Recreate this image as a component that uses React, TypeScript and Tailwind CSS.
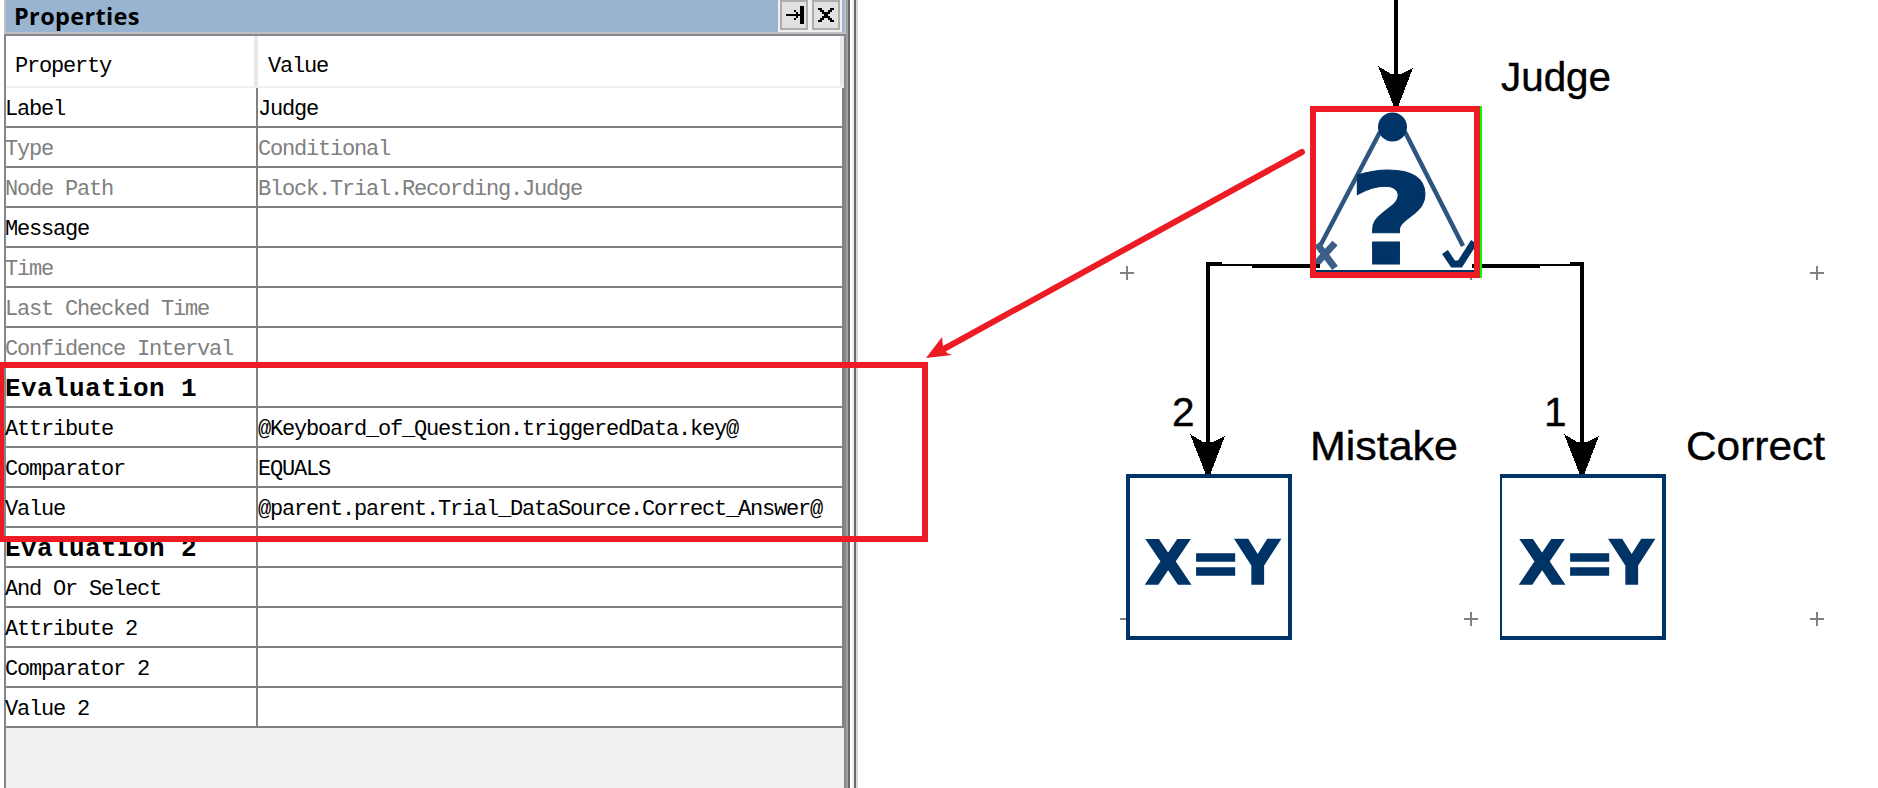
type Row = { name: string; value?: string; kind?: 'dim' | 'head' };

const rows: Row[] = [
  { name: 'Label', value: 'Judge' },
  { name: 'Type', value: 'Conditional', kind: 'dim' },
  { name: 'Node Path', value: 'Block.Trial.Recording.Judge', kind: 'dim' },
  { name: 'Message' },
  { name: 'Time', kind: 'dim' },
  { name: 'Last Checked Time', kind: 'dim' },
  { name: 'Confidence Interval', kind: 'dim' },
  { name: 'Evaluation 1', kind: 'head' },
  { name: 'Attribute', value: '@Keyboard_of_Question.triggeredData.key@' },
  { name: 'Comparator', value: 'EQUALS' },
  { name: 'Value', value: '@parent.parent.Trial_DataSource.Correct_Answer@' },
  { name: 'Evaluation 2', kind: 'head' },
  { name: 'And Or Select' },
  { name: 'Attribute 2' },
  { name: 'Comparator 2' },
  { name: 'Value 2' },
];

const mono = "font-['Liberation_Mono',monospace]";

function PropertyRow({ name, value, kind }: Row) {
  const tone =
    kind === 'head'
      ? 'text-[26px] leading-[42px] font-bold tracking-[0.4px] text-black'
      : kind === 'dim'
        ? 'text-[22px] leading-[44px] tracking-[-1.2px] text-[#808080]'
        : 'text-[22px] leading-[44px] tracking-[-1.2px] text-black';
  return (
    <div className={`flex h-10 w-[838px] border-r-2 border-b-2 border-[#808080] whitespace-pre ${tone}`}>
      <div className="w-[252px] shrink-0 border-r-2 border-[#808080]">
        <span className="-ml-px">{name}</span>
      </div>
      <div>{value}</div>
    </div>
  );
}

function PropertiesPanel() {
  return (
    <aside className="flex h-full w-[858px] shrink-0 pl-1">
      <div className="flex w-[842px] flex-col">
        <header className="flex h-[34px] shrink-0 border-x-2 border-b-2 border-[#c0c0c0] bg-[#99b4d1]">
          <h1 className="flex-1 pl-2 font-['Open_Sans',sans-serif] text-[23.5px] leading-[32px] font-bold tracking-[0.35px] text-black">
            Properties
          </h1>
          <div className="mr-0.5 flex h-8 w-16 gap-1 bg-[#f0f0f0] px-0.5 pb-0.5">
            <button aria-label="Pin" className="h-[30px] w-7 border-2 border-[#adadad] bg-[#e1e1e1]">
              <svg viewBox="0 0 24 26" className="block h-[26px] w-6" shapeRendering="crispEdges">
                <path d="M4 12h14v2H4zM12 8h2v2h2v2h2v2h-2v2h-2v2h-2v-2h2v-6h-2zM18 4h4v18h-4z" />
              </svg>
            </button>
            <button aria-label="Close" className="h-[30px] w-7 border-2 border-[#adadad] bg-[#e1e1e1]">
              <svg viewBox="0 0 24 26" className="block h-[26px] w-6" shapeRendering="crispEdges">
                <path d="M4 6h4v2h2v2h4V8h2V6h4v2h-2v2h-2v2h-2v2h2v2h2v2h2v2h-4v-2h-2v-2h-4v2H8v2H4v-2h2v-2h2v-2h2v-2H8v-2H6V8H4z" />
              </svg>
            </button>
          </div>
        </header>
        <div className="flex flex-1 flex-col border-x-2 border-t-2 border-[#828790] bg-[#f0f0f0]">
          <div className={`flex h-[52px] shrink-0 border-b-2 border-[#f0f0f0] bg-white text-[22px] leading-[62px] tracking-[-1.2px] ${mono}`}>
            <div className="w-[252px] border-r-4 border-[#e9e9e9] pl-[9px]">Property</div>
            <div className="flex-1 border-r-4 border-[#e9e9e9] pl-[10px]">Value</div>
          </div>
          <div className={`bg-white ${mono}`}>
            {rows.map((r) => (
              <PropertyRow key={r.name} {...r} />
            ))}
          </div>
        </div>
      </div>
      <div className="w-0.5 bg-[#a0a0a0]" />
      <div className="w-0.5 bg-[#696969]" />
      <div className="w-0.5 bg-white" />
      <div className="w-0.5 bg-[#f0f0f0]" />
      <div className="w-0.5 bg-[#696969]" />
      <div className="w-0.5 bg-[#d8d8d8]" />
    </aside>
  );
}

function ArrowHead({ x, y }: { x: number; y: number }) {
  return (
    <path
      d={`M${x - 2} ${y}L${x - 18} ${y - 41}L${x - 5} ${y - 33}H${x + 5}L${x + 17} ${y - 39}L${x + 2} ${y}Z`}
      fill="#000"
      shapeRendering="crispEdges"
    />
  );
}

function Assignment({ x, left }: { x: number; left: number }) {
  return (
    <g>
      <rect x={x} y={474} width={166} height={166} fill="#003366" />
      <rect x={x + left} y={478} width={162 - left} height={158} fill="#fff" />
      <g fill="#003366" stroke="#003366" strokeWidth="1.5" fontFamily="'DejaVu Sans'" fontWeight="700" fontSize="60">
        <text y="584" x={`${x + 19} ${x + 64.5} ${x + 110}`}>X=Y</text>
      </g>
    </g>
  );
}

function Diagram() {
  return (
    <svg viewBox="858 0 1020 788" className="block h-[788px] w-[1020px]">
      <path
        d="M1120 273h14M1127 266v14M1810 273h14M1817 266v14M1464 273h14M1471 266v14M1120 619h14M1464 619h14M1471 612v14M1810 619h14M1817 612v14"
        stroke="#808080"
        strokeWidth="2"
      />
      <g fill="none" stroke="#000" strokeWidth="4">
        <path d="M1396 0V106" />
        <path d="M1320 266H1252M1208 474V264H1222" />
        <path d="M1472 266H1540M1582 474V264H1570" />
        <path d="M1220 265H1254M1538 265H1572" strokeWidth="2" />
      </g>
      <ArrowHead x={1396} y={107} />
      <ArrowHead x={1208} y={475} />
      <ArrowHead x={1582} y={475} />
      <g fontFamily="'Liberation Sans'" fontSize="40.5" fill="#000" stroke="#000" strokeWidth="0.4">
        <text x="1501" y="91" textLength="110" lengthAdjust="spacingAndGlyphs">Judge</text>
        <text x="1310" y="460" textLength="148" lengthAdjust="spacingAndGlyphs">Mistake</text>
        <text x="1686" y="460" textLength="139" lengthAdjust="spacingAndGlyphs">Correct</text>
        <text x="1172" y="426">2</text>
        <text x="1544" y="426">1</text>
      </g>
      <Assignment x={1126} left={4} />
      <Assignment x={1500} left={2} />
      <rect x="1316" y="112" width="158" height="160" fill="#fff" />
      <g stroke="#003366" fill="none">
        <path d="M1380 132L1319 248M1405 132L1463 246" strokeWidth="4.5" stroke="#2d567f" />
        <circle cx="1392.500" cy="127" r="14.500" fill="#003366" stroke="none" />
        <path d="M1317 244L1335 268M1335 243L1316 264" strokeWidth="7" stroke="#3b5f87" />
        <path d="M1445 252L1453 264H1460L1474 242" strokeWidth="7" />
        <path d="M1316 271H1474" strokeWidth="2" />
        <path d="M1316 266H1320M1472 266H1474" strokeWidth="4" stroke="#000" />
      </g>
      <text
        transform="translate(1347 264) scale(1.2 1)"
        fontFamily="'DejaVu Sans'"
        fontWeight="700"
        fontSize="126"
        fill="#003366"
        stroke="#003366"
        strokeWidth="1"
      >
        ?
      </text>
      <rect x="1313" y="109" width="164" height="166" fill="none" stroke="#ed1c24" strokeWidth="6" />
      <path d="M1481 106V278" stroke="#00ff00" strokeWidth="2" />
    </svg>
  );
}

export default function App() {
  return (
    <main className="relative flex h-[788px] w-[1878px] overflow-hidden bg-white">
      <PropertiesPanel />
      <Diagram />
      <svg viewBox="0 0 1878 788" className="pointer-events-none absolute inset-0 h-[788px] w-[1878px]">
        <rect x="1" y="365" width="924" height="174" fill="none" stroke="#ed1c24" strokeWidth="6" />
        <path d="M1302 152L942 350" stroke="#ed1c24" strokeWidth="6" strokeLinecap="round" />
        <path d="M926 358L942 337L943 346L947 353L952 355Z" fill="#ed1c24" />
      </svg>
    </main>
  );
}
